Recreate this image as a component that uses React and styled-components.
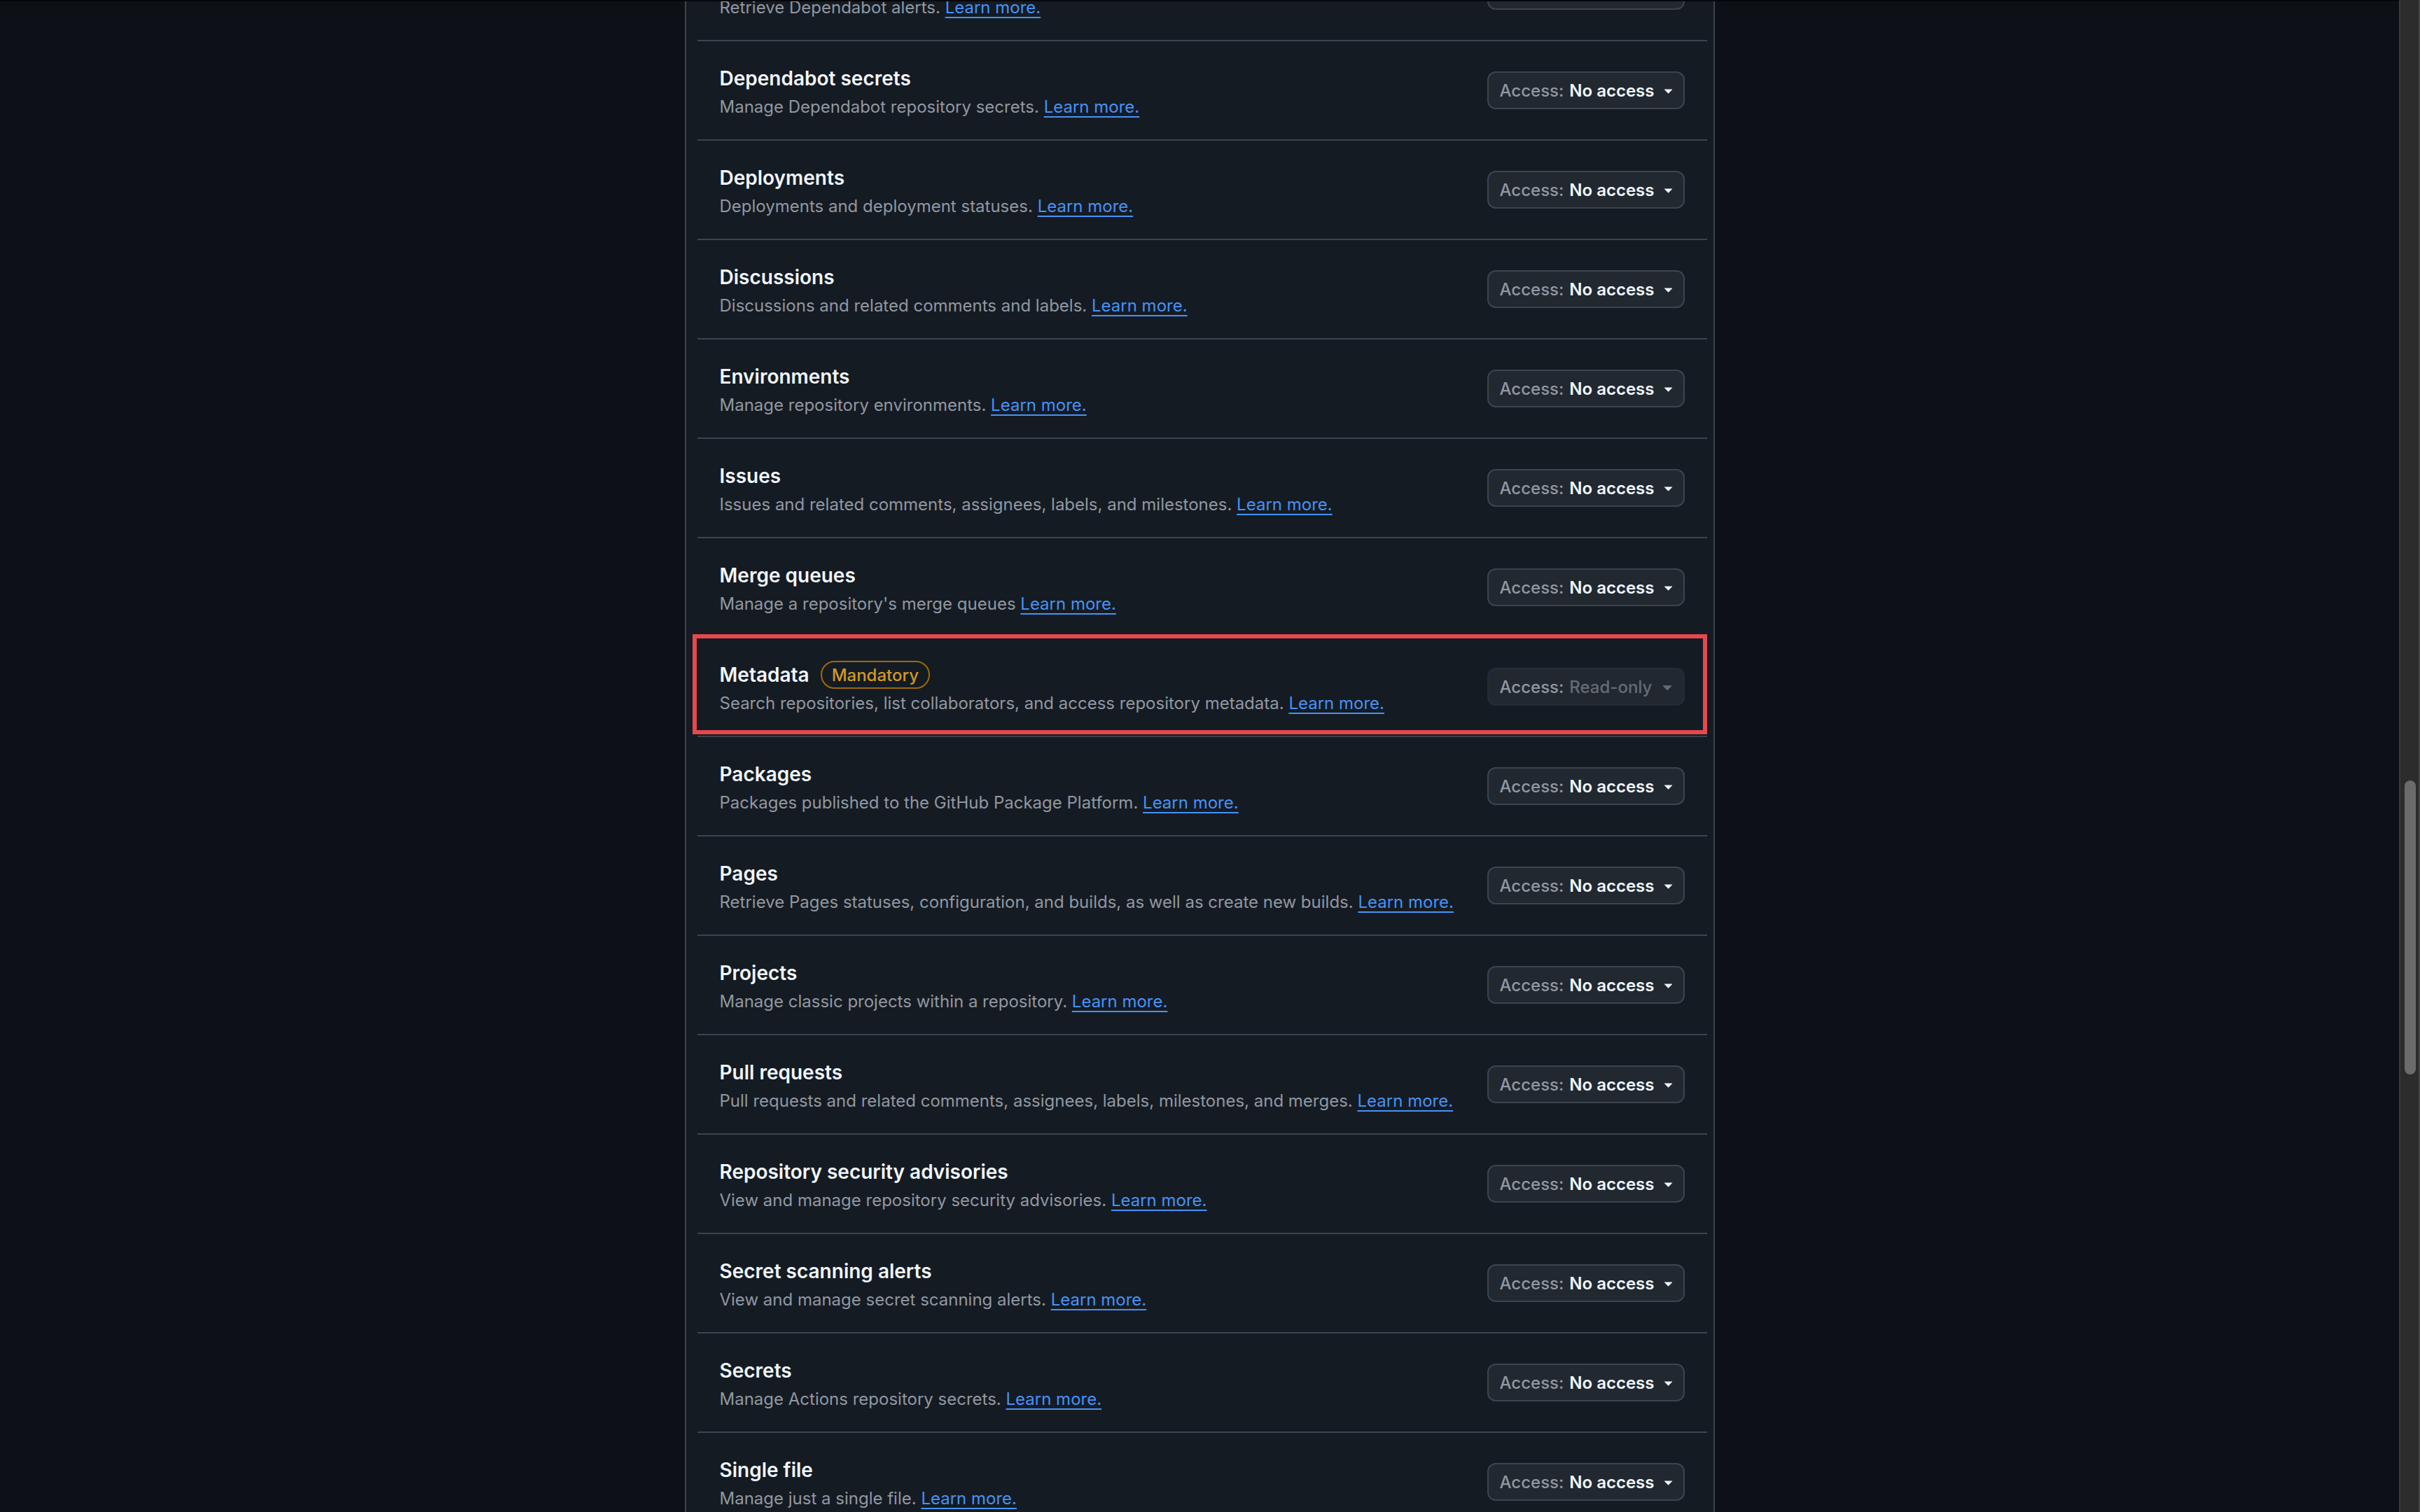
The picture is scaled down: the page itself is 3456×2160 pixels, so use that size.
import React from "react";
import styled, { createGlobalStyle } from "styled-components";

const permissions = [
  { name: "Dependabot alerts", desc: "Retrieve Dependabot alerts." },
  { name: "Dependabot secrets", desc: "Manage Dependabot repository secrets." },
  { name: "Deployments", desc: "Deployments and deployment statuses." },
  { name: "Discussions", desc: "Discussions and related comments and labels." },
  { name: "Environments", desc: "Manage repository environments." },
  { name: "Issues", desc: "Issues and related comments, assignees, labels, and milestones." },
  { name: "Merge queues", desc: "Manage a repository's merge queues" },
  {
    name: "Metadata",
    desc: "Search repositories, list collaborators, and access repository metadata.",
    mandatory: true,
  },
  { name: "Packages", desc: "Packages published to the GitHub Package Platform." },
  {
    name: "Pages",
    desc: "Retrieve Pages statuses, configuration, and builds, as well as create new builds.",
  },
  { name: "Projects", desc: "Manage classic projects within a repository." },
  {
    name: "Pull requests",
    desc: "Pull requests and related comments, assignees, labels, milestones, and merges.",
  },
  { name: "Repository security advisories", desc: "View and manage repository security advisories." },
  { name: "Secret scanning alerts", desc: "View and manage secret scanning alerts." },
  { name: "Secrets", desc: "Manage Actions repository secrets." },
  { name: "Single file", desc: "Manage just a single file." },
];

const GlobalStyle = createGlobalStyle`
  html, body {
    margin: 0;
    padding: 0;
    background: #0d1117;
    overflow: hidden;
  }
  * {
    box-sizing: border-box;
  }
`;

const Screen = styled.div`
  display: flex;
  width: 3456px;
  height: 2160px;
  overflow: hidden;
  font-family: Inter, "Liberation Sans", sans-serif;
`;

const Main = styled.div`
  flex: 1;
  display: flex;
  justify-content: center;
  border-top: 2px solid #05070a;
  overflow: hidden;
`;

const Panel = styled.div`
  width: 1471px;
  padding: 0 9px 0 16px;
  background: #151b23;
  border-left: 2px solid #3d444d;
  border-right: 2px solid #3d444d;
`;

const List = styled.div`
  margin-top: -87px;
`;

const Row = styled.div`
  position: relative;
  display: flex;
  align-items: center;
  gap: 32px;
  padding: 32px 32px 28px;
  border-top: 2px solid #3d444d;
`;

const Info = styled.div`
  flex: 1;
  min-width: 0;
`;

const Title = styled.div`
  display: flex;
  align-items: center;
  gap: 16px;
  height: 42px;
  font-size: 28px;
  font-weight: 600;
  color: #f0f6fc;
`;

const Desc = styled.div`
  margin-top: 2px;
  font-size: 24px;
  line-height: 36px;
  color: #9198a1;
`;

const Link = styled.a`
  color: #4493f8;
  text-decoration: underline;
  text-decoration-thickness: 2px;
  text-underline-offset: 5px;
`;

const Badge = styled.span`
  display: inline-flex;
  align-items: center;
  height: 40px;
  padding: 0 14px;
  border: 2px solid #9e6a03;
  border-radius: 999px;
  font-size: 24px;
  font-weight: 500;
  color: #d29922;
`;

const AccessButton = styled.button`
  flex-shrink: 0;
  display: flex;
  align-items: center;
  gap: 8px;
  width: 282px;
  height: 54px;
  margin-bottom: 4px;
  padding: 0 8px 0 16px;
  border: 2px solid ${(p) => (p.disabled ? "#262c36" : "#3d444d")};
  border-radius: 12px;
  background: #212830;
  font-family: inherit;
  font-size: 24px;
  font-weight: 500;
  white-space: nowrap;
  color: ${(p) => (p.disabled ? "#656c76" : "#f0f6fc")};
`;

const Label = styled.span`
  color: #9198a1;
`;

const Value = styled.span`
  font-weight: ${(p) => (p.muted ? 500 : 600)};
  color: ${(p) => (p.muted ? "#656c76" : "#f0f6fc")};
`;

const Caret = styled.svg`
  margin-left: auto;
  width: 32px;
  height: 32px;
  fill: currentColor;
`;

const Highlight = styled.div`
  position: absolute;
  top: -5px;
  left: -7px;
  right: 0;
  bottom: 2px;
  border: 6px solid #e5484d;
  pointer-events: none;
`;

const Scrollbar = styled.div`
  width: 30px;
  flex-shrink: 0;
  padding: 1115px 4px 0 6px;
  background: #2c2c2c;
  border-left: 2px solid #3b3b3b;
  border-right: 2px solid #454545;
`;

const Thumb = styled.div`
  width: 16px;
  height: 420px;
  border-radius: 8px;
  background: #6b6b6b;
`;

function TriangleDown() {
  return (
    <Caret viewBox="0 0 16 16">
      <path d="m4.427 7.427 3.396 3.396a.25.25 0 0 0 .354 0l3.396-3.396A.25.25 0 0 0 11.396 7H4.604a.25.25 0 0 0-.177.427Z" />
    </Caret>
  );
}

function PermissionRow({ item }) {
  return (
    <Row>
      <Info>
        <Title>
          {item.name}
          {item.mandatory && <Badge>Mandatory</Badge>}
        </Title>
        <Desc>
          {item.desc} <Link href="#">Learn more.</Link>
        </Desc>
      </Info>
      {item.mandatory ? (
        <AccessButton disabled>
          <Label>Access:</Label>
          <Value muted>Read-only</Value>
          <TriangleDown />
        </AccessButton>
      ) : (
        <AccessButton>
          <Label>Access:</Label>
          <Value>No access</Value>
          <TriangleDown />
        </AccessButton>
      )}
      {item.mandatory && <Highlight />}
    </Row>
  );
}

export default function App() {
  return (
    <>
      <GlobalStyle />
      <Screen>
        <Main>
          <Panel>
            <List>
              {permissions.map((p) => (
                <PermissionRow key={p.name} item={p} />
              ))}
            </List>
          </Panel>
        </Main>
        <Scrollbar>
          <Thumb />
        </Scrollbar>
      </Screen>
    </>
  );
}
